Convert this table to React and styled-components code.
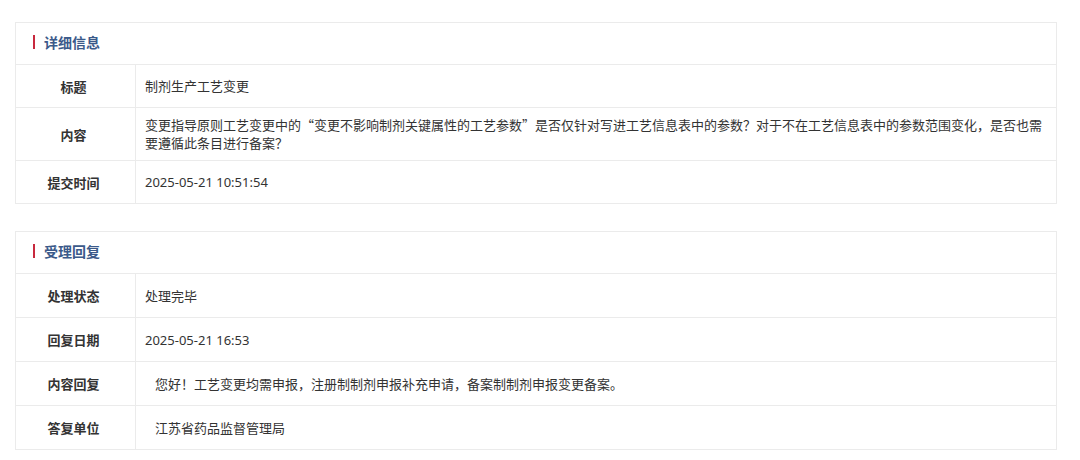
import React from 'react'
import styled, { createGlobalStyle } from 'styled-components';

const GlobalStyle = createGlobalStyle`
	html, body {
		margin: 0;
		padding: 0;
		background: #fff;
		font-family: "Noto Sans CJK SC", "Noto Sans", sans-serif;
		color: #333;
	}
`

const Page = styled.div`
	width: 1080px;
	padding: 22px 23px 0 15px;
	box-sizing: border-box;
	display: flex;
	flex-direction: column;
	gap: 27px;
`

const Panel = styled.section`
	border: 1px solid #ebebeb;
	background: #fff;
`

const PanelHeader = styled.div`
	height: 42px;
	box-sizing: border-box;
	display: flex;
	align-items: center;
	padding: 0 0 3px 17px;
	border-bottom: 1px solid #ebebeb;
`

const PanelTitle = styled.h3`
	margin: 0;
	font-size: 14px;
	font-weight: 700;
	color: #3b5a8a;
	line-height: 1;
	display: flex;
	align-items: center;

	&::before{
		content: '';
		width: 2px;
		height: 14px;
		background: #c8293e;
		margin-right: 9px;
	}
`

const Row = styled.div`
	display: flex;
	min-height: ${props => props.tall ? '43px' : '42px'};
	&:not(:last-child){
		border-bottom: 1px solid #ebebeb;
	}
`

const Label = styled.div`
	width: 120px;
	flex-shrink: 0;
	box-sizing: border-box;
	padding-right: 4px;
	border-right: 1px solid #ebebeb;
	display: flex;
	align-items: center;
	justify-content: center;
	font-size: 13px;
	font-weight: 700;
	color: #333;
`

const Value = styled.div`
	flex: 1;
	display: flex;
	align-items: center;
	padding: 8px 10px 8px ${props => props.indent ? '19px' : '9px'};
	font-family: ${props => props.latin ? '"Noto Sans", "Noto Sans CJK SC", sans-serif' : 'inherit'};
	font-size: 13px;
	line-height: 18px;
	color: #333;
`

const details = [
	{ label: '标题', value: '制剂生产工艺变更' },
	{ label: '内容', value: '变更指导原则工艺变更中的“变更不影响制剂关键属性的工艺参数”是否仅针对写进工艺信息表中的参数？对于不在工艺信息表中的参数范围变化，是否也需要遵循此条目进行备案？' },
	{ label: '提交时间', value: '2025-05-21 10:51:54', latin: true },
]

const replies = [
	{ label: '处理状态', value: '处理完毕' },
	{ label: '回复日期', value: '2025-05-21 16:53', latin: true },
	{ label: '内容回复', value: '您好！工艺变更均需申报，注册制制剂申报补充申请，备案制制剂申报变更备案。', indent: true },
	{ label: '答复单位', value: '江苏省药品监督管理局', indent: true },
]

const InfoPanel = ({ title, rows, tall }) => (
	<Panel>
		<PanelHeader>
			<PanelTitle>{title}</PanelTitle>
		</PanelHeader>
		{rows.map(row => (
			<Row key={row.label} tall={tall}>
				<Label>{row.label}</Label>
				<Value indent={row.indent} latin={row.latin}>{row.value}</Value>
			</Row>
		))}
	</Panel>
)

const App = () => {
	return (
		<>
			<GlobalStyle />
			<Page>
				<InfoPanel title="详细信息" rows={details} />
				<InfoPanel title="受理回复" rows={replies} tall />
			</Page>
		</>
	)
}

export default App
